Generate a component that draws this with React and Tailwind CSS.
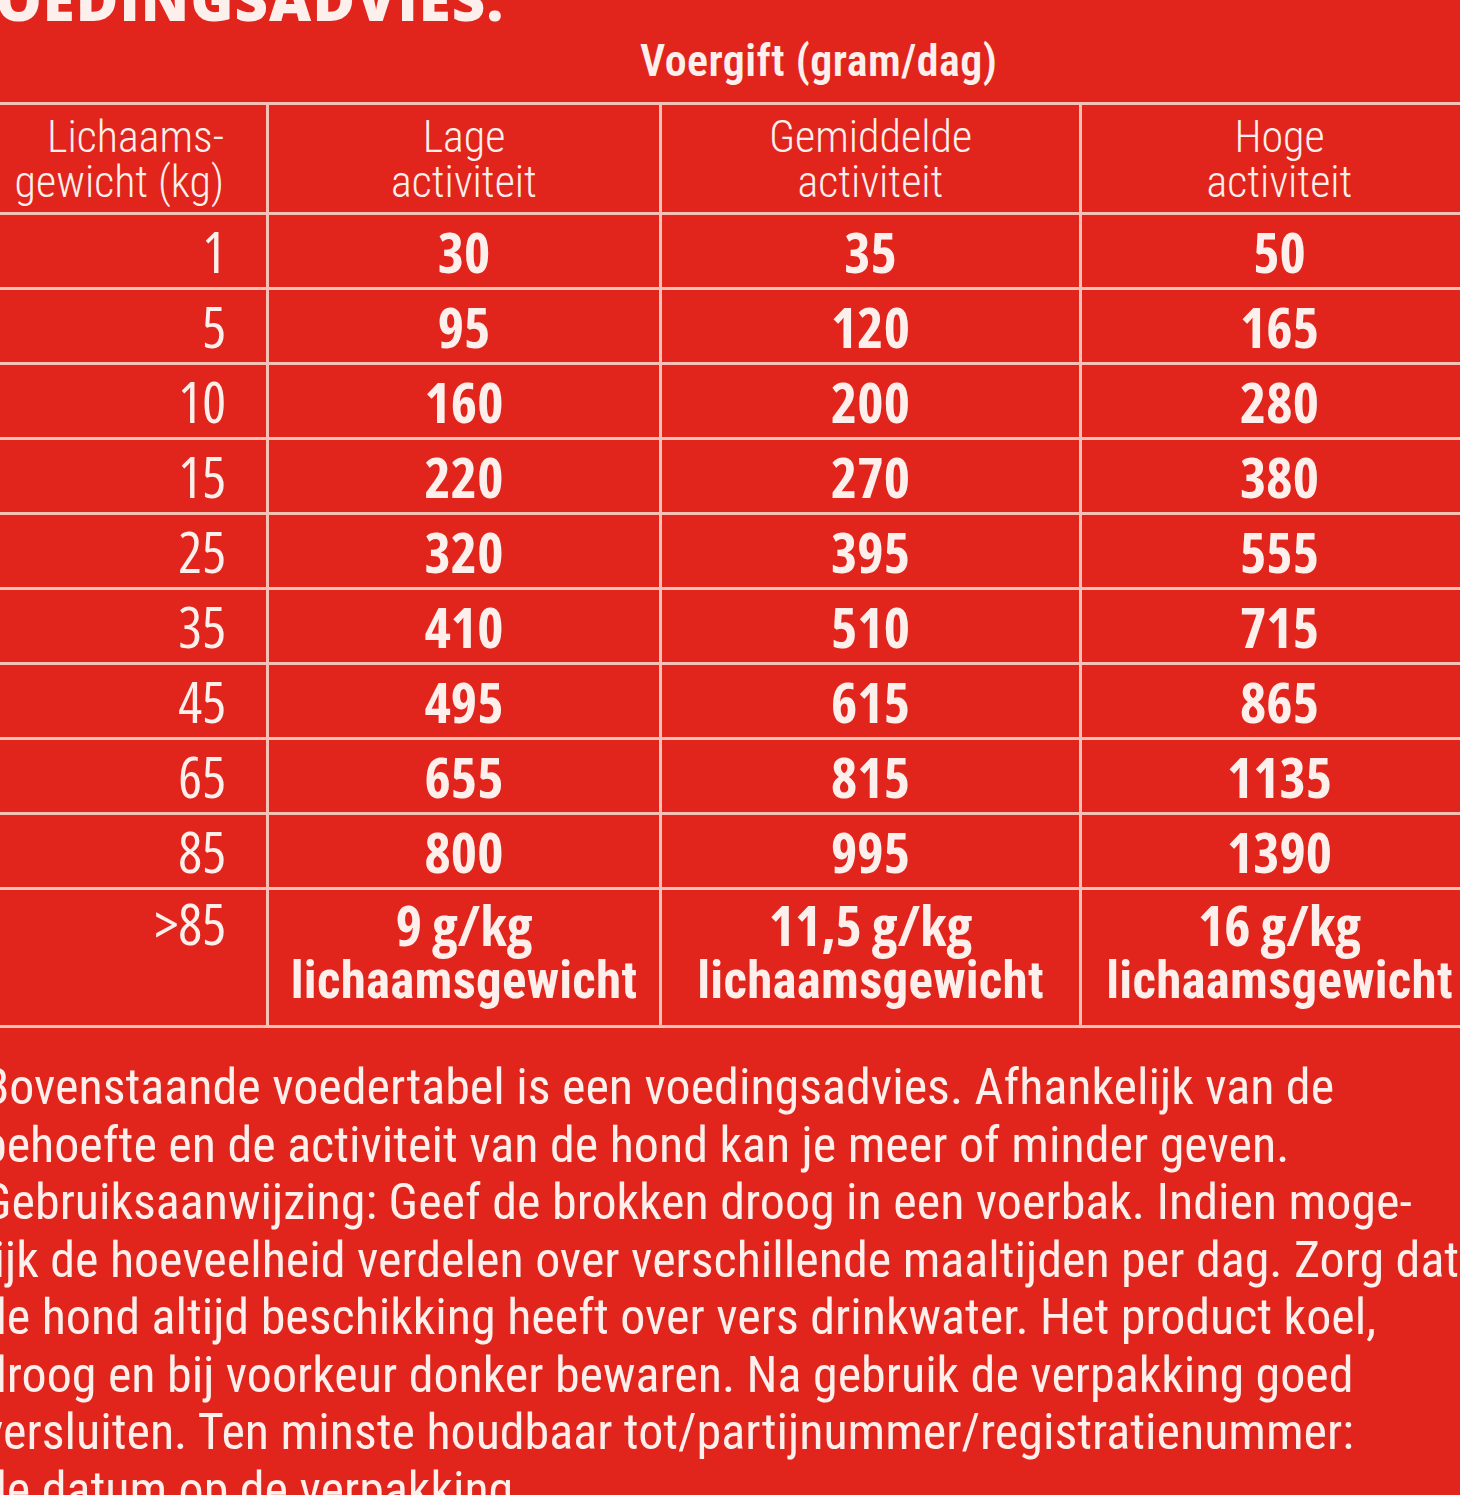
const rows = [
  ['1', '30', '35', '50'],
  ['5', '95', '120', '165'],
  ['10', '160', '200', '280'],
  ['15', '220', '270', '380'],
  ['25', '320', '395', '555'],
  ['35', '410', '510', '715'],
  ['45', '495', '615', '865'],
  ['65', '655', '815', '1135'],
  ['85', '800', '995', '1390'],
];

const lastRow = ['9 g/kg', '11,5 g/kg', '16 g/kg'];

const paragraph = [
  'Bovenstaande voedertabel is een voedingsadvies. Afhankelijk van de',
  'behoefte en de activiteit van de hond kan je meer of minder geven.',
  'Gebruiksaanwijzing: Geef de brokken droog in een voerbak. Indien moge-',
  'lijk de hoeveelheid verdelen over verschillende maaltijden per dag. Zorg dat',
  'de hond altijd beschikking heeft over vers drinkwater. Het product koel,',
  'droog en bij voorkeur donker bewaren. Na gebruik de verpakking goed',
  'versluiten. Ten minste houdbaar tot/partijnummer/registratienummer:',
  'de datum op de verpakking.',
];

function HeadCell({ top, bottom, right }) {
  return (
    <div
      className={`flex flex-col justify-center bg-[#e1251c] pt-[3px] font-['Roboto_Condensed',sans-serif] text-[44px] leading-[45px] font-light ${
        right ? 'items-end pr-[42px]' : 'items-center'
      }`}
    >
      <span>{top}</span>
      <span>{bottom}</span>
    </div>
  );
}

export default function App() {
  return (
    <div className="relative h-[1495px] w-[1460px] overflow-hidden bg-[#e1251c] font-['Open_Sans',sans-serif] text-[#fdf0ec]">
      {/* cut-off heading */}
      <h1 className="-ml-[46px] -mt-[30px] whitespace-nowrap text-[58px] font-extrabold leading-[58px] tracking-[0.02em]">
        VOEDINGSADVIES:
      </h1>

      <div className="mt-[12px] pl-[640px] font-['Roboto_Condensed',sans-serif] text-[44px] font-semibold leading-[43px] tracking-[0.01em]">
        Voergift (gram/dag)
      </div>

      {/* table */}
      <div className="-ml-[30px] mt-[19px] grid w-[1504px] grid-cols-[296px_390px_417px_395px] grid-rows-[107px_repeat(9,72px)_135px] gap-[3px] bg-[#f5c1b4] py-[3px]">
        <HeadCell top="Lichaams-" bottom="gewicht (kg)" right />
        <HeadCell top="Lage" bottom="activiteit" />
        <HeadCell top="Gemiddelde" bottom="activiteit" />
        <HeadCell top="Hoge" bottom="activiteit" />

        {rows.map((r) =>
          r.map((v, i) => (
            <div
              key={r[0] + '-' + i}
              className={`flex items-center bg-[#e1251c] text-[56px] leading-none font-stretch-[75%] ${
                i === 0 ? 'justify-end pr-[40px] font-normal' : 'justify-center font-bold'
              }`}
            >
              {v}
            </div>
          ))
        )}

        <div className="flex justify-end bg-[#e1251c] pr-[40px] pt-[3px] text-[56px] leading-[60px] font-stretch-[75%]">
          &gt;85
        </div>
        {lastRow.map((v) => (
          <div key={v} className="flex flex-col items-center bg-[#e1251c] pt-[4px] font-bold">
            <span className="text-[56px] leading-[60px] font-stretch-[75%]">{v}</span>
            <span className="font-['Roboto_Condensed',sans-serif] text-[51px] leading-[54px] tracking-[0.005em]">lichaamsgewicht</span>
          </div>
        ))}
      </div>

      {/* instructions */}
      <div className="-ml-[18px] mt-[31px] font-['Roboto_Condensed',sans-serif] text-[50px] leading-[57.5px]">
        {paragraph.map((line) => (
          <div key={line} className="whitespace-nowrap">
            {line}
          </div>
        ))}
      </div>
    </div>
  );
}
